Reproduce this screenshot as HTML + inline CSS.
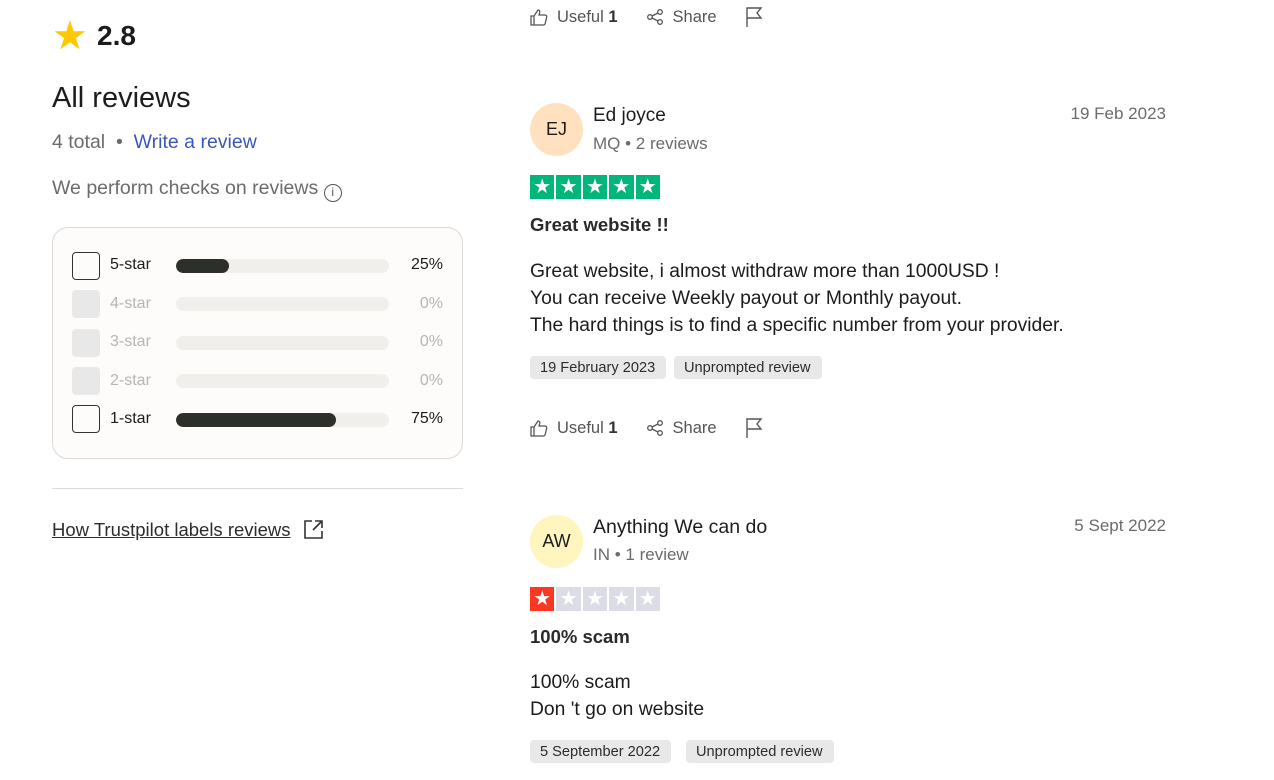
<!DOCTYPE html>
<html><head><meta charset="utf-8"><style>
*{margin:0;padding:0;box-sizing:border-box}
body{width:1274px;height:780px;background:#fff;font-family:"Liberation Sans",sans-serif;color:#1c1c1c;position:relative;overflow:hidden}
.a{position:absolute;white-space:nowrap}
.g{color:#6b6b6b}
.row .cb{position:absolute;left:72px;width:28px;height:28px;border-radius:4px}
.bar{position:absolute;left:176px;width:213px;height:14px;border-radius:7px;background:#f1efeb;overflow:hidden}
.bar i{display:block;height:100%;background:#2d2f2a;border-radius:7px}
.lbl{position:absolute;left:110px;font-size:16px}
.pct{position:absolute;right:831px;font-size:16px}
.stars{position:absolute;left:530px;display:flex;gap:2px}
.stars span{width:24.4px;height:24px;display:flex;align-items:center;justify-content:center;color:#fff;font-size:20px;line-height:1}
.tag{position:absolute;height:23px;background:#e8e8e8;border-radius:4px;font-size:14.6px;padding:0 11px 0 10px;line-height:24px;color:#2c2c2c}
.av{position:absolute;left:530px;width:53px;height:53px;border-radius:50%;display:flex;align-items:center;justify-content:center;font-size:18px;color:#1c1c1c}
.act{position:absolute;left:530px;font-size:16.5px;color:#545454;display:flex;align-items:center}
.r{position:absolute;right:108px;white-space:nowrap}
</style></head><body>

<div class="a" style="left:52px;top:16px;font-size:40px;color:#ffc800;line-height:40px">★</div>
<div class="a" style="left:97px;top:20px;font-size:28px;font-weight:bold">2.8</div>
<div class="a" style="left:52px;top:82px;font-size:29px">All reviews</div>
<div class="a g" style="left:52px;top:131px;font-size:19.5px">4 total &nbsp;•&nbsp; <span style="color:#3c57bc">Write a review</span></div>
<div class="a g" style="left:52px;top:177px;font-size:19.5px">We perform checks on reviews <span style="display:inline-block;width:18px;height:18px;border:1.5px solid #555;border-radius:50%;font-size:12px;text-align:center;line-height:15px;vertical-align:-2px;color:#555">i</span></div>

<div class="a" style="left:52px;top:227px;width:411px;height:232px;border:1px solid #dcdad6;border-radius:16px;background:#fdfcfb"></div>
<div class="row">
<div class="cb" style="top:252px;border:1.5px solid #333"></div><div class="lbl" style="top:256px">5-star</div><div class="bar" style="top:259px"><i style="width:53px"></i></div><div class="pct" style="top:256px">25%</div>
<div class="cb" style="top:290px;background:#e8e8e8"></div><div class="lbl" style="top:295px;color:#b5b5b5">4-star</div><div class="bar" style="top:297px"></div><div class="pct" style="top:295px;color:#b5b5b5">0%</div>
<div class="cb" style="top:329px;background:#e8e8e8"></div><div class="lbl" style="top:333px;color:#b5b5b5">3-star</div><div class="bar" style="top:336px"></div><div class="pct" style="top:333px;color:#b5b5b5">0%</div>
<div class="cb" style="top:367px;background:#e8e8e8"></div><div class="lbl" style="top:372px;color:#b5b5b5">2-star</div><div class="bar" style="top:374px"></div><div class="pct" style="top:372px;color:#b5b5b5">0%</div>
<div class="cb" style="top:405px;border:1.5px solid #333"></div><div class="lbl" style="top:410px">1-star</div><div class="bar" style="top:413px"><i style="width:160px"></i></div><div class="pct" style="top:410px">75%</div>
</div>
<div class="a" style="left:52px;top:488px;width:411px;height:1px;background:#dcdad6"></div>
<div class="a" style="left:52px;top:519px;font-size:18.5px;text-decoration:underline;color:#2c2c2c">How Trustpilot labels reviews</div>
<svg class="a" style="left:304px;top:520px" width="19" height="19" viewBox="0 0 19 19" fill="none" stroke="#333" stroke-width="1.6"><path d="M8 1H1v17h17v-7M11 1h7v7M18 1l-9 9"/></svg>

<div class="act" style="top:7px"><svg width="18" height="18" viewBox="0 0 18 18" fill="none" stroke="#555" stroke-width="1.3"><path d="M1 8h3v9H1zM4 8l4-6c1.5 0 2 1 1.7 2.5L9 7h6c1.2 0 2 1 1.7 2l-1.5 6.5c-.3 1-1 1.5-2 1.5H4"/></svg><span style="margin-left:9px">Useful <b style="color:#333">1</b></span>
<svg style="margin-left:28px" width="18" height="18" viewBox="0 0 18 18" fill="none" stroke="#555" stroke-width="1.3"><circle cx="14" cy="4" r="2.3"/><circle cx="4" cy="9" r="2.3"/><circle cx="14" cy="14" r="2.3"/><path d="M6 8l6-3M6 10l6 3"/></svg><span style="margin-left:9px">Share</span>
<svg style="margin-left:28px" width="18" height="20" viewBox="0 0 18 20" fill="none" stroke="#555" stroke-width="1.4"><path d="M2 20V1h14l-4 5 4 5H2"/></svg></div>

<div class="av" style="top:103px;background:#ffe1bf">EJ</div>
<div class="a" style="left:593px;top:105px;font-size:19px">Ed joyce</div>
<div class="a g" style="left:593px;top:134px;font-size:17px">MQ • 2 reviews</div>
<div class="r g" style="top:104px;font-size:17px">19 Feb 2023</div>
<div class="stars" style="top:175px"><span style="background:#00b67a">★</span><span style="background:#00b67a">★</span><span style="background:#00b67a">★</span><span style="background:#00b67a">★</span><span style="background:#00b67a">★</span></div>
<div class="a" style="left:530px;top:214px;font-size:18.5px;font-weight:bold;color:#2a2a2a">Great website !!</div>
<div class="a" style="left:530px;top:258px;font-size:19.3px;line-height:27px">Great website, i almost withdraw more than 1000USD !<br>You can receive Weekly payout or Monthly payout.<br>The hard things is to find a specific number from your provider.</div>
<div class="tag" style="left:530px;top:356px">19 February 2023</div>
<div class="tag" style="left:674px;top:356px">Unprompted review</div>
<div class="act" style="top:418px"><svg width="18" height="18" viewBox="0 0 18 18" fill="none" stroke="#555" stroke-width="1.3"><path d="M1 8h3v9H1zM4 8l4-6c1.5 0 2 1 1.7 2.5L9 7h6c1.2 0 2 1 1.7 2l-1.5 6.5c-.3 1-1 1.5-2 1.5H4"/></svg><span style="margin-left:9px">Useful <b style="color:#333">1</b></span>
<svg style="margin-left:28px" width="18" height="18" viewBox="0 0 18 18" fill="none" stroke="#555" stroke-width="1.3"><circle cx="14" cy="4" r="2.3"/><circle cx="4" cy="9" r="2.3"/><circle cx="14" cy="14" r="2.3"/><path d="M6 8l6-3M6 10l6 3"/></svg><span style="margin-left:9px">Share</span>
<svg style="margin-left:28px" width="18" height="20" viewBox="0 0 18 20" fill="none" stroke="#555" stroke-width="1.4"><path d="M2 20V1h14l-4 5 4 5H2"/></svg></div>

<div class="av" style="top:515px;background:#fff5bf">AW</div>
<div class="a" style="left:593px;top:516px;font-size:19.5px">Anything We can do</div>
<div class="a g" style="left:593px;top:545px;font-size:17px">IN • 1 review</div>
<div class="r g" style="top:516px;font-size:17px">5 Sept 2022</div>
<div class="stars" style="top:587px"><span style="background:#ff3722">★</span><span style="background:#dcdce6">★</span><span style="background:#dcdce6">★</span><span style="background:#dcdce6">★</span><span style="background:#dcdce6">★</span></div>
<div class="a" style="left:530px;top:626px;font-size:18.5px;font-weight:bold;color:#2a2a2a">100% scam</div>
<div class="a" style="left:530px;top:669px;font-size:19.3px;line-height:27px">100% scam<br>Don 't go on website</div>
<div class="tag" style="left:530px;top:740px">5 September 2022</div>
<div class="tag" style="left:686px;top:740px">Unprompted review</div>
</body></html>
